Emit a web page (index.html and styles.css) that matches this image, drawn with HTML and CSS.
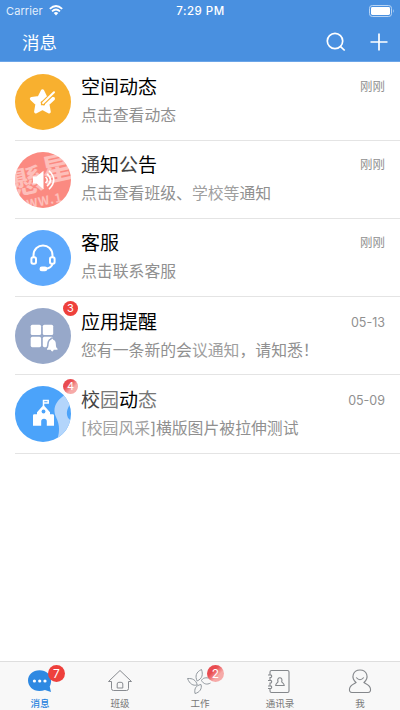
FILE: index.html
```html
<!DOCTYPE html>
<html lang="zh-CN">
<head>
<meta charset="utf-8">
<title>消息</title>
<link rel="stylesheet" href="styles.css">
</head>
<body>
<div class="app">
  <header class="header">
    <div class="status">
      <div class="carrier"><span>Carrier</span>
        <svg width="14" height="11" viewBox="0 0 14 11" fill="none" stroke="#fff" stroke-width="1.8"><path d="M.8 3.8Q7-1.8 13.2 3.8M3 6.3Q7 2.7 11 6.3"/><path d="M4.7 8Q7 6.2 9.3 8L7 10.5Z" fill="#fff" stroke="none"/></svg>
      </div>
      <div class="clock">7:29 PM</div>
      <svg class="battery" width="26" height="12" viewBox="0 0 26 12"><rect x=".5" y=".5" width="22" height="11" rx="2.8" fill="none" stroke="#b9d5f4"/><rect x="2" y="2" width="19" height="8" rx="1.4" fill="#fff"/><path d="M24 4q1.600 2 0 4z" fill="#b9d5f4"/></svg>
    </div>
    <div class="nav">
      <h1>消息</h1>
      <svg width="20" height="20" viewBox="0 0 20 20" fill="none" stroke="#fff" stroke-width="1.7"><circle cx="9" cy="9" r="7.7"/><path d="M14.3 14.3l4.400 4.200"/></svg>
      <svg class="plus" width="18" height="18" viewBox="0 0 18 18" stroke="#fff" stroke-width="1.7"><path d="M9 .5v17M.5 9h17"/></svg>
    </div>
  </header>

  <main class="list">
    <div class="row">
      <div class="avatar">
        <svg viewBox="0 0 56 56"><circle cx="28" cy="28" r="28" fill="#f8b02f"/><path d="M27.500 17l3.200 6.600 7.600 1.100-5.600 5.300 1.400 7.800-6.600-3.600-6.700 3.600 1.300-7.800-5.500-5.300 7.600-1.100z" fill="#fff" stroke="#fff" stroke-width="3.400" stroke-linejoin="round"/><path d="M40.500 17L27 30" stroke="#f8b02f" stroke-width="4.400"/><path d="M39 18.300L28 29" stroke="#fff" stroke-width="2" stroke-linecap="round"/><path d="M26.500 27.500v3.200h3.500" fill="none" stroke="#f8b02f" stroke-width="1.200"/></svg>
      </div>
      <div class="body"><div class="top"><h2>空间动态</h2><time>刚刚</time></div><p>点击查看动态</p></div>
    </div>
    <div class="row">
      <div class="avatar">
        <svg viewBox="0 0 56 56"><defs><clipPath id="disc"><circle cx="28" cy="28" r="28"/></clipPath></defs><circle cx="28" cy="28" r="28" fill="#fb8b82"/><g clip-path="url(#disc)"><g class="mark" transform="rotate(-12 28 28)"><text x="-3" y="37" font-size="31">懸</text><text x="29" y="31" font-size="31">星</text><text x="7" y="53" font-size="12" letter-spacing="1">WW.1</text></g></g><path d="M18 24.500h3.500l7-5.800v18.600l-7-5.800H18z" fill="#fff"/><path d="M30.500 25q3.500 3 0 6M32 21.800q7 6.200 0 12.400M34 18.800q9.500 9.200 0 18.400" fill="none" stroke="#fff" stroke-width="1.600"/></svg>
      </div>
      <div class="body"><div class="top"><h2><span class="soft">通</span>知<span class="soft">公</span>告</h2><time>刚刚</time></div><p>点击查看班级、<span class="pale">学校等</span>通知</p></div>
    </div>
    <div class="row">
      <div class="avatar">
        <svg viewBox="0 0 56 56"><circle cx="28" cy="28" r="28" fill="#5ea9fc"/><g fill="none" stroke="#fff" stroke-width="2"><path d="M18.500 28v-2.500c0-13.300 19-13.300 19 0V28M37.500 34c-.8 3-4 4.500-7 4.700"/><rect x="16.400" y="27.300" width="4.600" height="6.500" rx="1.700"/><rect x="35" y="27.300" width="4.600" height="6.500" rx="1.700"/></g><rect x="24.500" y="36.600" width="7.800" height="4.600" rx="2.300" fill="#fff"/></svg>
      </div>
      <div class="body"><div class="top"><h2>客服</h2><time>刚刚</time></div><p>点击联系客服</p></div>
    </div>
    <div class="row">
      <div class="avatar">
        <svg viewBox="0 0 56 56"><circle cx="28" cy="28" r="28" fill="#97a8c9"/><g fill="#fff"><rect x="15.700" y="16.700" width="10.400" height="10.400" rx="1.600"/><rect x="27.800" y="16.700" width="10.400" height="10.400" rx="1.600"/><rect x="15.700" y="28.800" width="10.400" height="10.400" rx="1.600"/><rect x="27.800" y="28.800" width="10.400" height="10.400" rx="1.600"/><path d="M32 40.700c2-1.600 1.300-4 2-6.500.6-1.800 1.800-2.400 2.400-2.500 0-1.400 1.800-1.400 1.800 0 1.400.3 2.300 1.500 2.500 3 .4 2.500-.2 4.500 1.800 6v1.100h-3.700q-1.500 3.200-3.200 0H32z" stroke="#97a8c9" stroke-width="3" paint-order="stroke"/></g></svg>
        <span class="badge">3</span>
      </div>
      <div class="body"><div class="top"><h2>应用提醒</h2><time class="date">05-13</time></div><p>您有一条新的会<span class="pale">议通知</span>，请知悉！</p></div>
    </div>
    <div class="row">
      <div class="avatar">
        <svg viewBox="0 0 56 56"><circle cx="28" cy="28" r="28" fill="#4ba3fa"/><path d="M50 9C41 14 37 23 41 31c3 6 4 12 2 20h14V35c-5-2-7-8-3-15 1-5-1-8-4-11z" fill="#b3d5fb" clip-path="url(#disc)"/><path d="M28.500 20v-5.500h4.700v2.400h-4" fill="none" stroke="#fff" stroke-width="1.500"/><path d="M22 26.200L28.500 19l6.500 7.200v2h2.800q1.200 0 1.200 1.200v10.400h-7.200v-4.300a2.800 2.800 0 0 0-5.600 0v4.300H18V29.400q0-1.200 1.200-1.200H22z" fill="#fff"/><circle cx="28.500" cy="25.500" r="1.900" fill="#4ba3fa"/></svg>
        <span class="badge faded">4</span>
      </div>
      <div class="body"><div class="top"><h2><span class="soft">校</span><span class="dim">园</span>动<span class="dim">态</span></h2><time class="date">05-09</time></div><p><span class="pale">[校园风采</span>]横版图片被拉伸测试</p></div>
    </div>
  </main>

  <nav class="tabs">
    <div class="tab active"><div class="icon">
      <svg width="26" height="24" viewBox="0 0 26 24"><path d="M12.500 1.200c6.700 0 11.600 4.400 11.600 10 0 2.500-.5 4.600-1.400 6.200l1.300 5.500-6.100-1.800c-1.600.7-3.400 1-5.400 1C5.800 22.100 1 17.300 1 11.600S5.800 1.200 12.500 1.200z" fill="#2e89e2"/><g fill="#fff"><circle cx="7.400" cy="12" r="1.600"/><circle cx="12.700" cy="12" r="1.600"/><circle cx="18" cy="12" r="1.600"/></g></svg><span class="badge tabbadge">7</span></div><span>消息</span></div>
    <div class="tab"><div class="icon">
      <svg width="26" height="24" viewBox="0 0 26 24" fill="none" stroke="#888b90" stroke-linejoin="round"><path d="M4.500 12.500H1.500L13 1.500 24.500 12.500H21.500V19.500q0 2-2 2h-13q-2 0-2-2zM10.200 19v-4q0-1.700 1.700-1.700h2.200q1.700 0 1.700 1.700v4z"/></svg></div><span>班级</span></div>
    <div class="tab"><div class="icon flower">
      <svg width="26" height="26" viewBox="0 0 26 26" fill="none" stroke="#92999f"><path d="M15.500.5c1.700 5 .8 9-4.300 11.500C8.800 7.500 10 3 15.500.5zM1.500 9.500c5-.3 8.700 1.500 9.700 6.500-4.200 1-7.500-1-9.700-6.500zM9 24.500c-.8-4.500.5-8 6-9 1.300 4-1.300 8-6 9zM24.500 14c-3.500 2-7 1.200-9-2.500 1-2.500 4.500-3.500 8.500-2"/></svg><span class="badge tabbadge faded">2</span></div><span>工作</span></div>
    <div class="tab"><div class="icon contact">
      <svg width="24" height="25" viewBox="0 0 24 25" fill="none" stroke="#84878b" stroke-width="1.100"><path d="M3 6V3q0-1.500 1.500-1.500h16Q22 1.500 22 3v19q0 1.500-1.500 1.500h-16Q3 23.500 3 22v-2.500M1 6h3q1.400 1.200 0 2.500H3v3M1 11.500h3q1.400 1.200 0 2.500H3v3M1 17h3q1.400 1.200 0 2.500H1"/><path d="M11 12.500c-1.800-5 5.500-5 3.700 0 0 1.500 2.500 1.500 2.500 4H8.700c0-2.500 2.300-2.500 2.300-4z"/></svg></div><span>通讯录</span></div>
    <div class="tab"><div class="icon">
      <svg width="24" height="25" viewBox="0 0 24 25" fill="none" stroke="#84878b" stroke-width="1.100"><path d="M8 13.500C2.500 8.500 5 1 12 1s9.500 7.500 4 12.500c1.500 1.500 6 1.800 6.500 6.500.3 2-.5 3.500-2.500 3.500H4c-2 0-2.800-1.500-2.500-3.500.5-4.700 5-5 6.500-6.500z"/><path d="M8.200 8.500q3.800 4.500 7.600 0"/></svg></div><span>我</span></div>
  </nav>
</div>
</body>
</html>
```
FILE: styles.css
```css
* { box-sizing: border-box; }
body { margin: 0; background: #fff; font-family: Inter, "Noto Sans CJK SC", sans-serif; }
svg { display: block; flex: none; }
h1, h2, p { margin: 0; font-weight: 400; }
.app { width: 400px; height: 710px; display: flex; flex-direction: column; overflow: hidden; }
.header { height: 62px; background: #4990e0; color: #fff; flex: none; border-bottom: 1px solid #6ba5e8; }
.status { height: 21px; display: grid; grid-template-columns: 1fr auto 1fr; align-items: center; padding: 0 5px 0 6px; font-size: 11px; line-height: 20px; }
.carrier { display: flex; align-items: center; gap: 6px; color: #e3effc; letter-spacing: .1px; }
.clock { font-weight: 500; font-size: 11.500px; letter-spacing: .5px; }
.battery { justify-self: end; }
.nav { height: 41px; display: flex; align-items: center; padding: 0 12px 0 22px; }
.nav h1 { flex: 1; font-size: 17.500px; line-height: 26px; padding-top: 2px; }
.plus { margin-left: 24px; }
.list { flex: 1; padding-top: .7px; }
.row { height: 78.200px; margin-left: 15px; display: flex; border-bottom: 1px solid #e4e4e4; }
.avatar { position: relative; width: 56px; height: 56px; margin: 11px 10px 0 0; flex: none; }
.avatar svg { width: 56px; height: 56px; }
.mark { fill: #fff; opacity: .45; font-family: "Noto Sans CJK SC", sans-serif; font-weight: 700; }
.body { flex: 1; padding: 11.300px 15px 0 0; }
.top { display: flex; justify-content: space-between; height: 27px; }
.top h2 { font-size: 19px; line-height: 27px; color: #000; }
time { font-size: 12.500px; line-height: 26px; color: #909090; }
.date { font-size: 12.500px; line-height: 27px; }
.body p { font-size: 15.850px; line-height: 24px; margin-top: 3px; color: #909090; white-space: nowrap; }
.dim { color: #777; }
.soft { color: #444; }
.body .pale { color: #a0a0a0; }
.badge { position: absolute; left: 48px; top: -7px; width: 15px; height: 15px; border-radius: 50%; background: #ee403c; color: #fff; font-size: 11px; line-height: 15px; text-align: center; }
.badge.faded { background: linear-gradient(135deg, #e94b50 35%, #f6aaa8 65%); }
.tabs { height: 49px; flex: none; display: grid; grid-template-columns: repeat(5, 1fr); background: #f8f8f8; border-top: 1px solid #dedede; }
.tab { display: flex; flex-direction: column; align-items: center; padding-top: 7px; font-size: 9.500px; line-height: 14px; color: #777; }
.active { color: #2481dd; font-weight: 500; }
.icon { position: relative; height: 28px; }
.contact { padding-right: 2px; }
.flower { right: 1px; }
.badge.tabbadge { left: 21px; top: -4px; width: 17px; height: 17px; font-size: 12px; line-height: 17px; font-weight: 400; }
```
